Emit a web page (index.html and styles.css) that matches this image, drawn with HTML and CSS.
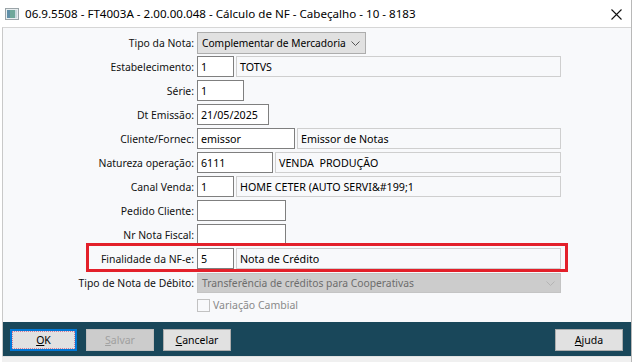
FILE: index.html
```html
<!DOCTYPE html>
<html lang="pt-BR">
<head>
<meta charset="utf-8">
<title>Cálculo de NF</title>
<link rel="stylesheet" href="styles.css">
</head>
<body>
<div class="window">
  <div class="titlebar">
    <svg class="appicon" width="14" height="12" viewBox="0 0 14 12">
      <rect x="0.5" y="0.5" width="13" height="11" fill="#e8eef0" stroke="#9aa4a8"/>
      <rect x="2" y="2" width="3" height="8" fill="#5f8fa8"/>
      <rect x="5" y="2" width="5" height="8" fill="#6fa89a"/>
      <rect x="10" y="2" width="2" height="8" fill="#c8d8dc"/>
    </svg>
    <span class="title">06.9.5508 - FT4003A - 2.00.00.048 - Cálculo de NF - Cabeçalho - 10 - 8183</span>
    <svg class="close" width="11" height="11" viewBox="0 0 11 11">
      <path d="M0.5 0.5 L10.5 10.5 M10.5 0.5 L0.5 10.5" stroke="#111" stroke-width="1.1" fill="none"/>
    </svg>
  </div>
  <div class="frame">
    <div class="form">
      <div class="row">
        <span class="label">Tipo da Nota:</span>
        <div class="fields">
          <div class="select w-tipo"><span class="sel-text">Complementar de Mercadoria</span>
            <svg class="chev" width="9" height="5" viewBox="0 0 9 5"><path d="M0.5 0.5 L4.5 4.5 L8.5 0.5" stroke="#555" fill="none"/></svg>
          </div>
        </div>
      </div>
      <div class="row">
        <span class="label">Estabelecimento:</span>
        <div class="fields"><div class="box w37">1</div><div class="box desc">TOTVS</div></div>
      </div>
      <div class="row">
        <span class="label">Série:</span>
        <div class="fields"><div class="box w47">1</div></div>
      </div>
      <div class="row">
        <span class="label">Dt Emissão:</span>
        <div class="fields"><div class="box w72">21/05/2025</div></div>
      </div>
      <div class="row">
        <span class="label">Cliente/Fornec:</span>
        <div class="fields"><div class="box w98">emissor</div><div class="box desc">Emissor de Notas</div></div>
      </div>
      <div class="row">
        <span class="label">Natureza operação:</span>
        <div class="fields"><div class="box w76">6111</div><div class="box desc">VENDA&nbsp; PRODUÇÃO</div></div>
      </div>
      <div class="row">
        <span class="label">Canal Venda:</span>
        <div class="fields"><div class="box w37">1</div><div class="box desc">HOME CETER (AUTO SERVI&amp;#199;1</div></div>
      </div>
      <div class="row">
        <span class="label">Pedido Cliente:</span>
        <div class="fields"><div class="box w89"></div></div>
      </div>
      <div class="row">
        <span class="label">Nr Nota Fiscal:</span>
        <div class="fields"><div class="box w89"></div></div>
      </div>
      <div class="row highlight">
        <span class="label">Finalidade da NF-e:</span>
        <div class="fields"><div class="box w37">5</div><div class="box desc">Nota de Crédito</div></div>
      </div>
      <div class="row row-debito">
        <span class="label">Tipo de Nota de Débito:</span>
        <div class="fields">
          <div class="select disabled full"><span class="sel-text">Transferência de créditos para Cooperativas</span>
            <svg class="chev" width="9" height="5" viewBox="0 0 9 5"><path d="M0.5 0.5 L4.5 4.5 L8.5 0.5" stroke="#b4b4b4" fill="none"/></svg>
          </div>
        </div>
      </div>
      <div class="row row-check">
        <span class="label"></span>
        <div class="fields check"><span class="checkbox"></span><span class="check-label">Variação Cambial</span></div>
      </div>
    </div>
    <div class="footer">
      <div class="btn focused"><u>O</u>K</div>
      <div class="btn disabled-btn"><u>S</u>alvar</div>
      <div class="btn"><u>C</u>ancelar</div>
      <div class="spacer"></div>
      <div class="btn"><u>A</u>juda</div>
    </div>
  </div>
  <div class="bottomstrip"></div>
</div>
</body>
</html>
```

FILE: styles.css
```css
html, body {
  margin: 0;
  padding: 0;
  background: #ffffff;
}
body {
  font-family: "Noto Sans", "Open Sans", sans-serif;
  font-size: 10.4px;
  color: #1a1a1a;
  width: 635px;
  height: 362px;
  overflow: hidden;
}
.window {
  width: 632px;
  height: 362px;
  display: flex;
  flex-direction: column;
  background: #ffffff;
  border-right: 1px solid #b8b8b8;
  box-sizing: border-box;
}
.titlebar {
  height: 27px;
  display: flex;
  align-items: center;
  padding-left: 5px;
  background: #ffffff;
  flex: none;
}
.appicon { flex: none; margin-right: 6px; margin-top: 1px; }
.title {
  font-size: 11.6px;
  color: #000;
  flex: 1;
  white-space: nowrap;
}
.close { flex: none; margin-right: 9px; margin-top: 1px; }
.frame {
  margin-left: 2px;
  border-left: 1px solid #c9c9c9;
  border-top: 1px solid #d6d6d6;
  background: #f8f9fb;
  display: flex;
  flex-direction: column;
  flex: none;
}
.form {
  padding-top: 4px;
  height: 287px;
  box-sizing: border-box;
}
.row {
  display: grid;
  grid-template-columns: 191px 1fr;
  column-gap: 3px;
  height: 24px;
  align-items: start;
}
.label {
  text-align: right;
  line-height: 22px;
  white-space: nowrap;
  color: #111;
}
.fields {
  display: flex;
  gap: 2px;
  width: 364px;
}
.box {
  height: 21px;
  box-sizing: border-box;
  border: 1px solid #7f7f7f;
  background: #ffffff;
  padding: 0 3px;
  line-height: 20px;
  white-space: nowrap;
  overflow: hidden;
  flex: none;
  color: #000;
  font-size: 10.7px;
}
.box.desc {
  flex: 1;
  border-color: #cfcfcf;
  background: #f8f9fb;
}
.w37 { width: 37px; }
.w47 { width: 47px; }
.w72 { width: 72px; }
.w76 { width: 76px; }
.w89 { width: 89px; }
.w98 { width: 98px; }
.select {
  height: 22px;
  box-sizing: border-box;
  border: 1px solid #adadad;
  background: #e1e1e1;
  padding: 0 0 0 4px;
  line-height: 21px;
  display: flex;
  align-items: center;
  white-space: nowrap;
  color: #000;
  font-size: 10.2px;
}
.sel-text { flex: 1; }
.w-tipo { width: 169px; }
.select .chev { margin-right: 5px; flex: none; }
.select.full { width: 364px; }
.select.disabled {
  height: 20px;
  line-height: 19px;
  background: #cccccc;
  border-color: #c4c4c4;
  color: #6d6d6d;
  padding-left: 4px;
  font-size: 10.3px;
}
.highlight { position: relative; }
.highlight::before {
  content: "";
  position: absolute;
  left: 83px;
  top: -5px;
  width: 482px;
  height: 29px;
  border: 3px solid #e3202a;
  box-sizing: border-box;
  pointer-events: none;
}
.row-debito { margin-top: 1px; height: 20px; }
.row-debito .label { line-height: 20px; }
.row-check { margin-top: 6px; height: 13px; }
.check { align-items: center; gap: 3px; }
.checkbox {
  width: 13px;
  height: 13px;
  box-sizing: border-box;
  border: 1px solid #c2c2c2;
  background: #f8f9fb;
  flex: none;
}
.check-label {
  color: #8a8a8a;
  line-height: 13px;
  font-size: 10.5px;
}
.footer {
  margin-top: 7px;
  height: 34px;
  background: #19475a;
  display: flex;
  align-items: flex-start;
  gap: 9px;
  padding: 7px 8px 0 7px;
  box-sizing: border-box;
}
.spacer { flex: 1; }
.btn {
  width: 68px;
  height: 22px;
  box-sizing: border-box;
  border: 1px solid #adadad;
  background: #e1e1e1;
  text-align: center;
  line-height: 20px;
  color: #000;
  flex: none;
  font-size: 10.5px;
}
.btn.focused {
  width: 67px;
  border: 2px solid #0078d7;
  line-height: 18px;
  outline: 1px dotted #d07a9a;
  outline-offset: -3px;
}
.btn.disabled-btn {
  background: #cccccc;
  border-color: #bfbfbf;
  color: #a0a0a0;
}
.bottomstrip {
  flex: 1;
  background: #f0f0f0;
  border-top: 1px solid #e2e2e2;
  margin-left: 2px;
}
```
